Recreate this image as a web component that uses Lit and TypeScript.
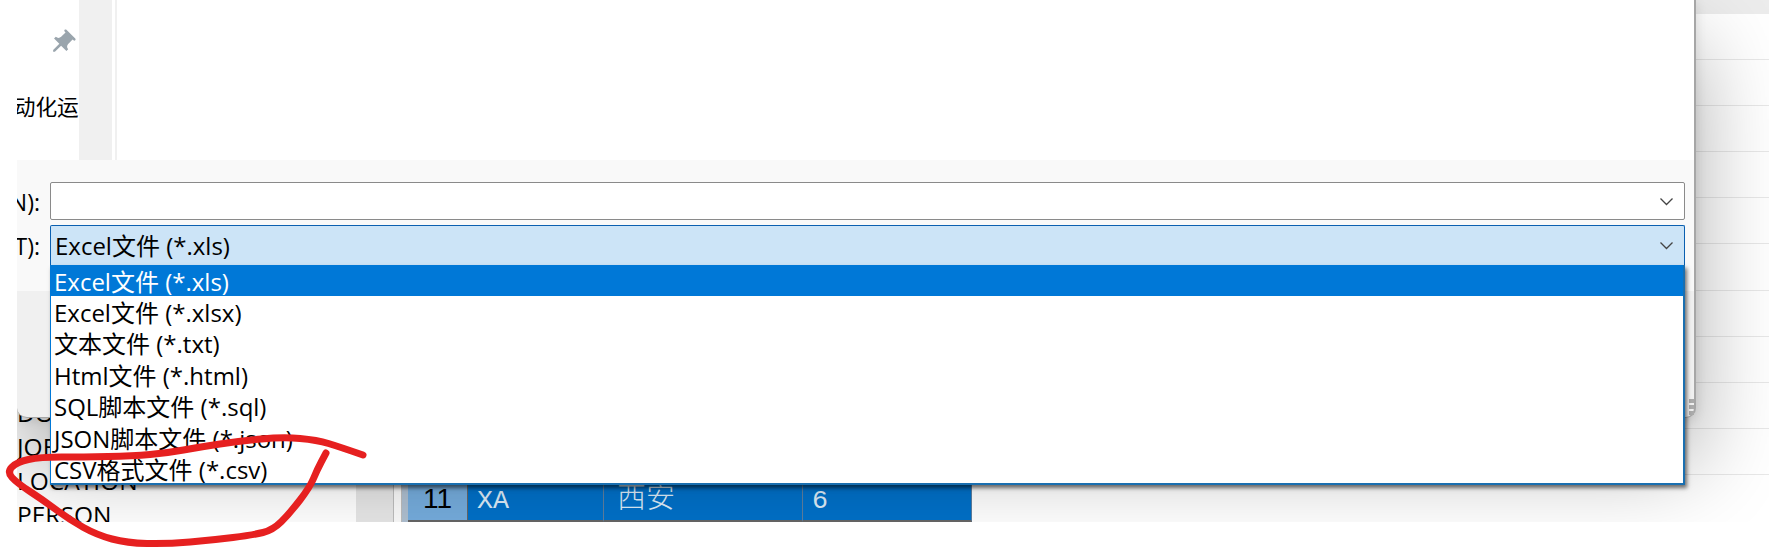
import { LitElement, html, css, svg } from "lit"
import { customElement } from "lit/decorators.js"

const FILE_TYPES = [
  "Excel文件 (*.xls)",
  "Excel文件 (*.xlsx)",
  "文本文件 (*.txt)",
  "Html文件 (*.html)",
  "SQL脚本文件 (*.sql)",
  "JSON脚本文件 (*.json)",
  "CSV格式文件 (*.csv)",
]

// hand-drawn red circle round the CSV entry, sampled from the screenshot
const SCRIBBLE: Array<[number, number]> = [
  [363, 455], [340, 447], [317, 440], [283, 437], [240, 441], [200, 447], [167, 453],
  [133, 456], [83, 457], [40, 457], [17, 462], [7, 472], [17, 483], [43, 500], [70, 520],
  [97, 535], [127, 543], [167, 544], [213, 540], [253, 535], [273, 530], [290, 513],
  [310, 487], [317, 470], [326, 453],
]

function smoothPath(pts: Array<[number, number]>): string {
  let d = `M${pts[0][0]} ${pts[0][1]}`
  for (let i = 1; i < pts.length - 1; i++) {
    const mx = (pts[i][0] + pts[i + 1][0]) / 2
    const my = (pts[i][1] + pts[i + 1][1]) / 2
    d += ` Q${pts[i][0]} ${pts[i][1]} ${mx} ${my}`
  }
  const last = pts[pts.length - 1]
  return `${d} L${last[0]} ${last[1]}`
}

const chevron = html`<svg class="chevron" width="15" height="9" viewBox="0 0 15 9">
  <path d="M1.5 1.5 L7.5 7.5 L13.5 1.5" fill="none" stroke="#444" stroke-width="1.3" />
</svg>`

@customElement("app-root")
export class AppRoot extends LitElement {
  static styles = css`
    :host {
      display: block;
      position: relative;
      width: 1769px;
      height: 550px;
      overflow: hidden;
      background: #fff;
      font-family: "Open Sans", "Noto Sans CJK SC", sans-serif;
      font-size: 24px;
      color: #000;
    }
    .scene {
      position: absolute;
      left: 17px;
      top: 0;
      width: 1752px;
      height: 522px;
      overflow: hidden;
    }
    .backdrop {
      display: flex;
      height: 522px;
    }
    .tree {
      width: 339px;
      height: 522px;
      display: flex;
      flex-direction: column;
      justify-content: flex-end;
      overflow: hidden;
      flex: none;
      font-size: 24.5px;
    }
    .tree div {
      height: 34px;
      line-height: 34px;
      flex: none;
      white-space: nowrap;
      transform: translateY(10px);
    }
    .splitter {
      width: 37px;
      flex: none;
      background: #e6e6e6;
      border-right: 1px solid #bdbdbd;
    }
    .gutter {
      width: 7px;
      flex: none;
      background: #fafafa;
      border-right: 1px solid #bdbdbd;
    }
    .edge {
      width: 6px;
      flex: none;
      background: #aebfd0;
    }
    .grid {
      flex: 1;
      display: flex;
      flex-direction: column;
    }
    .grid-head {
      height: 14px;
      flex: none;
      background: #ececec;
    }
    .row {
      height: 46.1px;
      flex: none;
      display: flex;
      box-sizing: border-box;
      border-bottom: 1px solid #e8e8e8;
    }
    .row:first-of-type {
      height: 44px;
    }
    .row.selected {
      border-bottom: none;
      height: 47px;
    }
    .row-no {
      width: 60px;
      box-sizing: border-box;
      background: #75acdc;
      border-right: 1px solid #666;
      border-bottom: 2px solid #666;
      text-align: center;
      line-height: 47px;
      font-family: "Liberation Sans", sans-serif;
      font-size: 28px;
    }
    .cell {
      box-sizing: border-box;
      background: #0070c8;
      border-right: 1px solid #5f7f9f;
      border-bottom: 2px solid #666;
      color: #dcebf8;
      padding-left: 9px;
      line-height: 53px;
      font-family: "Liberation Mono", "Noto Sans CJK SC", monospace;
      font-size: 26.7px;
    }
    .cell.cjk {
      font-family: "Liberation Serif", "Noto Sans CJK SC", serif;
      font-size: 29px;
      font-weight: 300;
      padding-left: 13px;
      line-height: 47px;
    }
    .grid-end {
      flex: 1;
      background: #f0f0f0;
    }
    .dialog {
      position: absolute;
      left: 0;
      top: 0;
      width: 1679px;
      height: 418px;
      box-sizing: border-box;
      display: flex;
      flex-direction: column;
      background: #f0f0f0;
      border-right: 2px solid #a6a6a6;
      border-bottom: 1px solid #a6a6a6;
      border-radius: 0 0 10px 10px;
      box-shadow: 0 45px 90px rgba(0, 0, 0, 0.33), 0 2px 12px rgba(0, 0, 0, 0.12);
    }
    .dlg-body {
      height: 160px;
      flex: none;
      display: flex;
      background: #fff;
    }
    .sidebar {
      width: 62px;
      flex: none;
      overflow: hidden;
      display: flex;
      flex-direction: column;
    }
    .pin {
      margin: 28px 0 0 30px;
      transform: rotate(45deg);
      flex: none;
    }
    .nav-label {
      margin: 34px 0 0 -25px;
      white-space: nowrap;
      font-size: 21.7px;
      line-height: 30px;
    }
    .strip {
      width: 33px;
      flex: none;
      background: #f0f0f0;
    }
    .pane {
      flex: 1;
      margin-left: 3px;
      border-left: 2px solid #f0f0f0;
    }
    .dlg-form {
      height: 131px;
      flex: none;
      box-sizing: border-box;
      background: #f9f9f9;
      padding: 22px 9px 0 0;
      display: flex;
      flex-direction: column;
      gap: 5px;
    }
    .form-row {
      display: flex;
      align-items: center;
    }
    .label {
      width: 33px;
      flex: none;
      padding-right: 10px;
      box-sizing: border-box;
      display: flex;
      justify-content: flex-end;
      white-space: nowrap;
      overflow: hidden;
      font-size: 23px;
    }
    .field {
      flex: 1;
      height: 38px;
      box-sizing: border-box;
      border: 1px solid #8a8a8a;
      border-radius: 2px;
      background: #fff;
      display: flex;
      align-items: center;
      padding: 0 10px 0 4px;
      line-height: 1;
    }
    .field.open {
      height: 40px;
      border-color: #0a5fb0;
      border-bottom: none;
      border-radius: 2px 2px 0 0;
      background: #cce4f7;
    }
    .chevron {
      margin-left: auto;
    }
    .dlg-bottom {
      flex: 1;
      position: relative;
      border-radius: 0 0 10px 10px;
    }
    .grip {
      position: absolute;
      right: 0;
      bottom: 2px;
      display: grid;
      gap: 2px;
    }
    .grip i {
      display: block;
      width: 5px;
      height: 4px;
      background: #ababab;
    }
    .dropdown {
      position: absolute;
      left: 33px;
      top: 265px;
      width: 1635px;
      height: 220px;
      box-sizing: border-box;
      display: flex;
      flex-direction: column;
      background: #fff;
      border: 1px solid #0078d7;
      border-top: none;
      border-right: 2px solid #1a6fb0;
      border-bottom: 2px solid #1a6fb0;
      box-shadow: 2px 3px 4px rgba(0, 0, 0, 0.55);
    }
    .option {
      height: 31.4px;
      flex: none;
      display: flex;
      align-items: center;
      padding-left: 3px;
      white-space: nowrap;
      line-height: 1;
    }
    .option span {
      position: relative;
      top: 1px;
    }
    .option.active {
      background: #0078d7;
      color: #fff;
    }
    .scribble {
      position: absolute;
      left: 0;
      top: 0;
      pointer-events: none;
    }
  `

  render() {
    const emptyRows = Array.from({ length: 10 })
    return html`
      <div class="scene">
        <div class="backdrop">
          <div class="tree">
            <div>DOC</div>
            <div>JOB</div>
            <div>LOCATION</div>
            <div>PERSON</div>
          </div>
          <div class="splitter"></div>
          <div class="gutter"></div>
          <div class="edge"></div>
          <div class="grid">
            <div class="grid-head"></div>
            ${emptyRows.map(() => html`<div class="row"></div>`)}
            <div class="row selected">
              <div class="row-no">11</div>
              <div class="cell" style="width:136px">XA</div>
              <div class="cell cjk" style="width:199px">西安</div>
              <div class="cell" style="width:169px">6</div>
            </div>
            <div class="grid-end"></div>
          </div>
        </div>

        <div class="dialog">
          <div class="dlg-body">
            <div class="sidebar">
              <svg class="pin" width="30" height="30" viewBox="0 0 24 24" fill="#9aa5ad">
                <path d="M16 9V4h1c.55 0 1-.45 1-1s-.45-1-1-1H7c-.55 0-1 .45-1 1s.45 1 1 1h1v5c0 1.66-1.34 3-3 3v2h5.97v7l1 1 1-1v-7H19v-2c-1.66 0-3-1.34-3-3z" />
              </svg>
              <div class="nav-label">自动化运维</div>
            </div>
            <div class="strip"></div>
            <div class="pane"></div>
          </div>
          <div class="dlg-form">
            <div class="form-row">
              <div class="label">文件名(N):</div>
              <div class="field">${chevron}</div>
            </div>
            <div class="form-row">
              <div class="label">保存类型(T):</div>
              <div class="field open"><span>${FILE_TYPES[0]}</span>${chevron}</div>
            </div>
          </div>
          <div class="dlg-bottom">
            <div class="grip"><i></i><i></i><i></i></div>
          </div>
        </div>

        <div class="dropdown">
          ${FILE_TYPES.map(
            (t, i) => html`<div class="option ${i === 0 ? "active" : ""}"><span>${t}</span></div>`,
          )}
        </div>
      </div>

      <svg class="scribble" width="1769" height="550" viewBox="0 0 1769 550">
        ${svg`<path d=${smoothPath(SCRIBBLE)} fill="none" stroke="#e62020" stroke-width="7" stroke-linecap="round" stroke-linejoin="round" />`}
      </svg>
    `
  }
}
